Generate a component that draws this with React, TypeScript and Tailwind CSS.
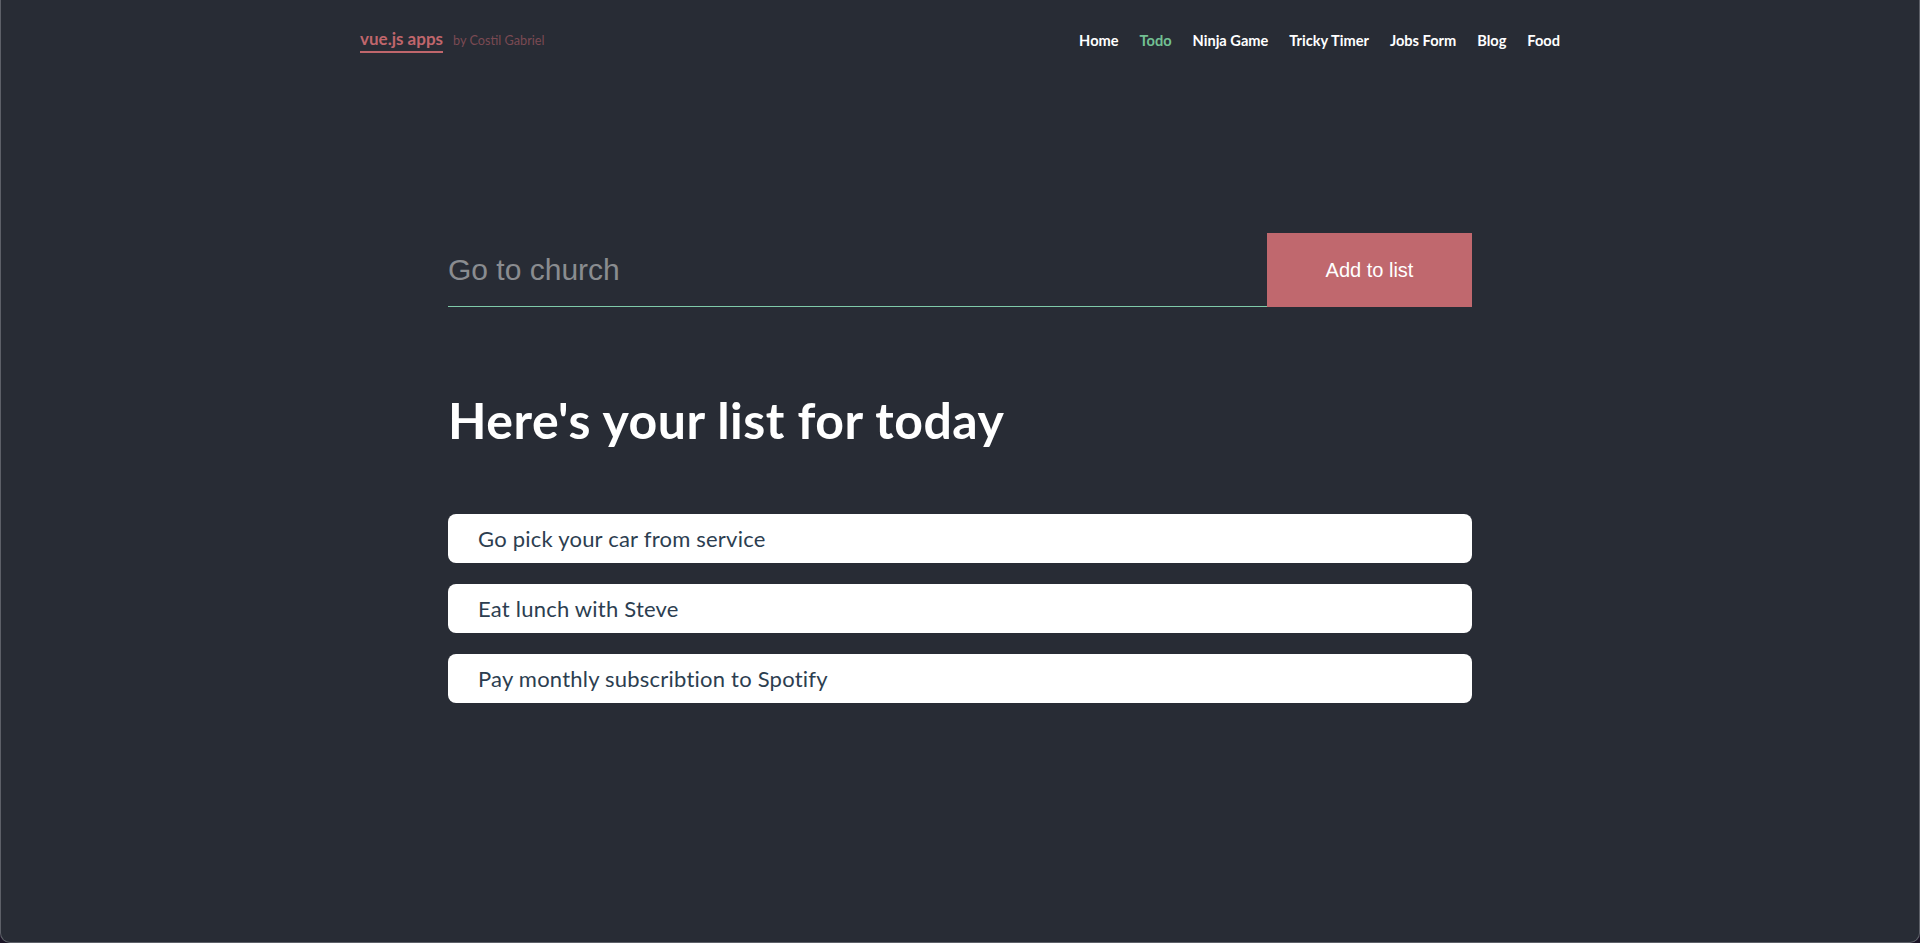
import React from 'react';

const links = ['Home', 'Todo', 'Ninja Game', 'Tricky Timer', 'Jobs Form', 'Blog', 'Food'];

const todos = [
  'Go pick your car from service',
  'Eat lunch with Steve',
  'Pay monthly subscribtion to Spotify',
];

export default function App() {
  return (
    <div className="h-[943px] bg-[#1b1426]">
      <div className="h-full bg-[#282c35] border-x border-b border-[#5d6068] rounded-b-[10px] font-['Lato',sans-serif]">
        {/* Header */}
        <header className="mx-auto w-[1200px] flex items-center justify-between pt-[29px]">
          <div className="flex items-baseline gap-[10px]">
            <a className="text-[17px] font-bold text-[#c0666c] border-b-2 border-[#c0666c] leading-[20px] pb-[2px]">
              vue.js apps
            </a>
            <span className="text-[12.7px] text-[#7b4a53]">by Costil Gabriel</span>
          </div>
          <nav className="flex items-center gap-[21px] text-[14.6px] font-bold text-white">
            {links.map((l) => (
              <a key={l} className={l === 'Todo' ? 'text-[#72c093]' : ''}>
                {l}
              </a>
            ))}
          </nav>
        </header>

        <main className="mx-auto w-[1024px] pt-[180px]">
          {/* Input row */}
          <div className="flex h-[74px]">
            <input
              className="flex-1 bg-transparent border-b border-[#7fcaa9] outline-none text-[30px] text-white placeholder:text-[#8a8c90] font-['Liberation_Sans',Arial,sans-serif]"
              placeholder="Go to church"
            />
            <button className="w-[205px] bg-[#c0686e] text-white text-[20px] font-['Liberation_Sans',Arial,sans-serif]">
              Add to list
            </button>
          </div>

          <h1 className="mt-[83px] text-[50px] font-bold text-white leading-[60px] tracking-[0.01em]">
            Here's your list for today
          </h1>

          <ul className="mt-[64px] flex flex-col gap-[21px]">
            {todos.map((t) => (
              <li
                key={t}
                className="h-[49px] bg-white rounded-[8px] flex items-center px-[30px] text-[22px] tracking-[0.01em] text-[#2c3e50]"
              >
                {t}
              </li>
            ))}
          </ul>
        </main>
      </div>
    </div>
  );
}
